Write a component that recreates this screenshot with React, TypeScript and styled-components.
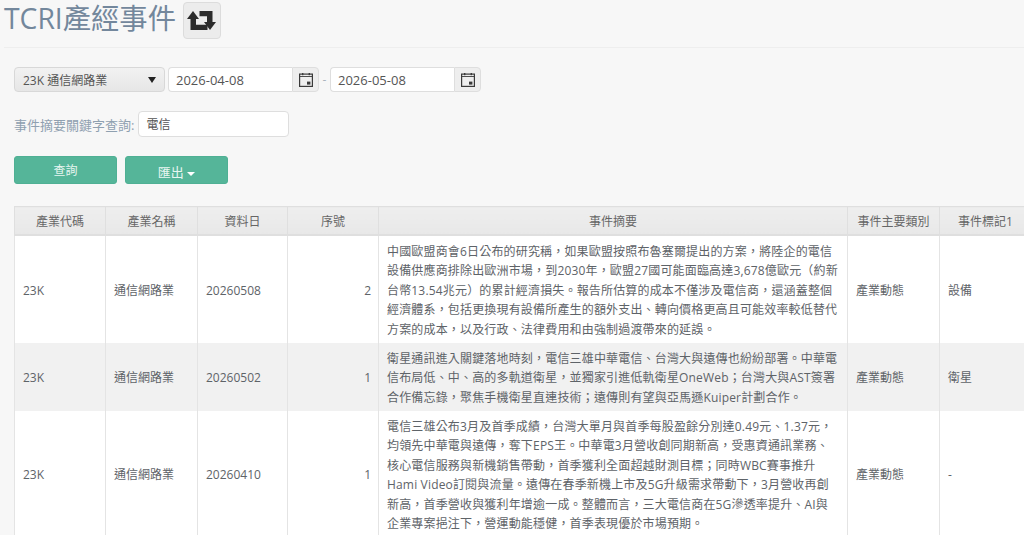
import { createGlobalStyle } from 'styled-components';
import styled from 'styled-components';

const rows = [
  {
    code: '23K',
    name: '通信網路業',
    date: '20260508',
    seq: 2,
    lines: [
      '中國歐盟商會6日公布的研究稱，如果歐盟按照布魯塞爾提出的方案，將陸企的電信',
      '設備供應商排除出歐洲市場，到2030年，歐盟27國可能面臨高達3,678億歐元（約新',
      '台幣13.54兆元）的累計經濟損失。報告所估算的成本不僅涉及電信商，還涵蓋整個',
      '經濟體系，包括更換現有設備所產生的額外支出、轉向價格更高且可能效率較低替代',
      '方案的成本，以及行政、法律費用和由強制過渡帶來的延誤。',
    ],
    type: '產業動態',
    tag: '設備',
  },
  {
    code: '23K',
    name: '通信網路業',
    date: '20260502',
    seq: 1,
    lines: [
      '衛星通訊進入關鍵落地時刻，電信三雄中華電信、台灣大與遠傳也紛紛部署。中華電',
      '信布局低、中、高的多軌道衛星，並獨家引進低軌衛星OneWeb；台灣大與AST簽署',
      '合作備忘錄，聚焦手機衛星直連技術；遠傳則有望與亞馬遜Kuiper計劃合作。',
    ],
    type: '產業動態',
    tag: '衛星',
  },
  {
    code: '23K',
    name: '通信網路業',
    date: '20260410',
    seq: 1,
    lines: [
      '電信三雄公布3月及首季成績，台灣大單月與首季每股盈餘分別達0.49元、1.37元，',
      '均領先中華電與遠傳，奪下EPS王。中華電3月營收創同期新高，受惠資通訊業務、',
      '核心電信服務與新機銷售帶動，首季獲利全面超越財測目標；同時WBC賽事推升',
      'Hami Video訂閱與流量。遠傳在春季新機上市及5G升級需求帶動下，3月營收再創',
      '新高，首季營收與獲利年增逾一成。整體而言，三大電信商在5G滲透率提升、AI與',
      '企業專案挹注下，營運動能穩健，首季表現優於市場預期。',
    ],
    type: '產業動態',
    tag: '-',
  },
];

const headers = ['產業代碼', '產業名稱', '資料日', '序號', '事件摘要', '事件主要類別', '事件標記1'];
const widths = [91, 92, 90, 91, 469, 92, 92];

const RetweetIcon = () => (
  <svg width="29" height="19" viewBox="0 0 29 19" fill="#2b2b2b">
    <path d="M6 0 L12 8 H9 V13.8 H20.5 V19 H3.5 V8 H0 Z" />
    <path d="M12.5 0 H25.5 V11 H29 L23 19 L17 11 H20 V5.2 H12.5 Z" />
  </svg>
);

const CalendarIcon = () => (
  <svg width="14" height="14" viewBox="0 0 14 14" fill="none">
    <rect x="0.6" y="1.1" width="12.8" height="12.3" stroke="#3a3a3a" strokeWidth="1.2" />
    <rect x="0.6" y="3" width="12.8" height="0.9" fill="#3a3a3a" />
    <rect x="3" y="0" width="1.4" height="2.2" fill="#3a3a3a" />
    <rect x="9.6" y="0" width="1.4" height="2.2" fill="#3a3a3a" />
    <rect x="8" y="8.6" width="3.4" height="3" fill="#3a3a3a" />
  </svg>
);

const DateField = ({ value }: { value: string }) => (
  <DateGroup>
    <DateInput defaultValue={value} readOnly />
    <DateAddon>
      <CalendarIcon />
    </DateAddon>
  </DateGroup>
);

const App = () => {
  return (
    <Page>
      <GlobalStyle />
      <TitleBar>
        <Title>TCRI產經事件</Title>
        <SwitchButton>
          <RetweetIcon />
        </SwitchButton>
      </TitleBar>

      <FilterRow>
        <SelectBox>
          <span>23K 通信網路業</span>
          <SelectArrow />
        </SelectBox>
        <DateField value="2026-04-08" />
        <Dash>-</Dash>
        <DateField value="2026-05-08" />
      </FilterRow>

      <KeywordRow>
        <KeywordLabel>事件摘要關鍵字查詢:</KeywordLabel>
        <KeywordInput defaultValue="電信" readOnly />
      </KeywordRow>

      <ButtonRow>
        <ActionButton>查詢</ActionButton>
        <ActionButton $large>
          匯出 <Caret />
        </ActionButton>
      </ButtonRow>

      <Table>
        <colgroup>
          {widths.map((w, i) => (
            <Col key={i} $w={w} />
          ))}
        </colgroup>
        <thead>
          <tr>
            {headers.map((h) => (
              <Th key={h}>{h}</Th>
            ))}
          </tr>
        </thead>
        <tbody>
          {rows.map((r) => (
            <Row key={r.date}>
              <Td>{r.code}</Td>
              <Td>{r.name}</Td>
              <Td>{r.date}</Td>
              <SeqCell>{r.seq}</SeqCell>
              <SummaryCell>
                {r.lines.map((line) => (
                  <SummaryLine key={line}>{line}</SummaryLine>
                ))}
              </SummaryCell>
              <Td>{r.type}</Td>
              <Td>{r.tag}</Td>
            </Row>
          ))}
        </tbody>
      </Table>
    </Page>
  );
};

const GlobalStyle = createGlobalStyle`
  html, body {
    margin: 0;
    height: 100%;
    overflow: hidden;
    background: #f7f7f7;
  }
  body {
    font-family: "Open Sans", "Noto Sans CJK TC", sans-serif;
    font-size: 12px;
    color: #73879c;
  }
`;

const Page = styled.div`
  width: 1024px;
  height: 535px;
  overflow: hidden;
`;

const TitleBar = styled.div`
  display: flex;
  align-items: flex-start;
  gap: 7px;
  height: 48px;
  margin-left: 4px;
  padding-top: 2px;
  box-sizing: border-box;
  border-bottom: 1px solid #eeeeee;
`;

const Title = styled.h3`
  margin: 0;
  font-size: 28.3px;
  font-weight: 400;
  line-height: 32px;
  color: #73879c;
`;

const SwitchButton = styled.button`
  display: flex;
  align-items: center;
  justify-content: center;
  width: 38px;
  height: 37px;
  padding: 0;
  background: #ececec;
  border: 1px solid #dcdcdc;
  border-radius: 4px;
`;

const FilterRow = styled.div`
  display: flex;
  align-items: center;
  margin: 19px 0 0 14px;
  height: 25px;
`;

const SelectBox = styled.div`
  display: flex;
  align-items: center;
  justify-content: space-between;
  box-sizing: border-box;
  width: 151px;
  height: 25px;
  margin-right: 3px;
  padding: 0 7px 0 8px;
  color: #555;
  background: linear-gradient(#f2f2f2, #e6e6e6);
  border: 1px solid #d8d8d8;
  border-radius: 4px;
`;

const SelectArrow = styled.i`
  width: 0;
  height: 0;
  margin-right: 1px;
  border-top: 6px solid #222;
  border-left: 4px solid transparent;
  border-right: 4px solid transparent;
`;

const DateGroup = styled.div`
  display: flex;
  width: 151px;
  height: 25px;
  box-sizing: border-box;
`;

const DateInput = styled.input`
  flex: 1;
  min-width: 0;
  box-sizing: border-box;
  padding: 0 7px;
  font: 13px "Open Sans", sans-serif;
  color: #555;
  background: #fff;
  border: 1px solid #dedede;
  border-right: none;
  border-radius: 4px 0 0 4px;
  outline: none;
`;

const DateAddon = styled.span`
  display: flex;
  align-items: center;
  justify-content: center;
  width: 25px;
  background: #eeeeee;
  border: 1px solid #dedede;
  border-radius: 0 4px 4px 0;
`;

const Dash = styled.span`
  width: 11px;
  text-align: center;
  color: #aab4be;
`;

const KeywordRow = styled.div`
  display: flex;
  align-items: center;
  gap: 4px;
  margin: 19px 0 0 14px;
  height: 26px;
`;

const KeywordLabel = styled.label`
  font-size: 13px;
  color: #8fa0b0;
`;

const KeywordInput = styled.input`
  width: 151px;
  height: 26px;
  box-sizing: border-box;
  padding: 0 7px;
  font: 12px "Open Sans", "Noto Sans CJK TC", sans-serif;
  color: #555;
  background: #fff;
  border: 1px solid #dedede;
  border-radius: 4px;
  outline: none;
`;

const ButtonRow = styled.div`
  display: flex;
  gap: 8px;
  margin: 19px 0 0 14px;
`;

const ActionButton = styled.button<{ $large?: boolean }>`
  width: 103px;
  height: 28px;
  padding: ${(p) => (p.$large ? '3px 0 0' : '0')};
  font-family: "Open Sans", "Noto Sans CJK TC", sans-serif;
  font-size: ${(p) => (p.$large ? '13px' : '12px')};
  color: #e8f5f1;
  background: #55b599;
  border: 1px solid #4fb094;
  border-radius: 3px;
`;

const Caret = styled.i`
  display: inline-block;
  vertical-align: middle;
  width: 0;
  height: 0;
  border-top: 4px solid #fff;
  border-left: 4px solid transparent;
  border-right: 4px solid transparent;
`;

const Table = styled.table`
  width: 1008px;
  margin: 22px 0 0 14px;
  table-layout: fixed;
  border-collapse: collapse;
  background: #fff;
`;

const Col = styled.col<{ $w: number }>`
  width: ${(p) => p.$w}px;
`;

const Th = styled.th`
  height: 27px;
  padding: 0;
  font-size: 12px;
  font-weight: 400;
  text-align: center;
  color: #666;
  background: linear-gradient(#eeeeee, #e8e8e8);
  border: 1px solid #dfdfdf;
  border-bottom-width: 2px;
`;

const Row = styled.tr`
  &:nth-child(even) {
    background: #f1f1f1;
  }
`;

const Td = styled.td`
  padding: 5.5px 8px 4px;
  font-size: 12px;
  line-height: 19.5px;
  color: #5e6368;
  border-left: 1px solid #e4e4e4;
  border-right: 1px solid #e4e4e4;
`;

const SeqCell = styled(Td)`
  padding-right: 7px;
  text-align: right;
`;

const SummaryCell = styled(Td)`
  white-space: nowrap;
  overflow: hidden;
`;

const SummaryLine = styled.div`
  letter-spacing: 0.17px;
`;

export default App;
